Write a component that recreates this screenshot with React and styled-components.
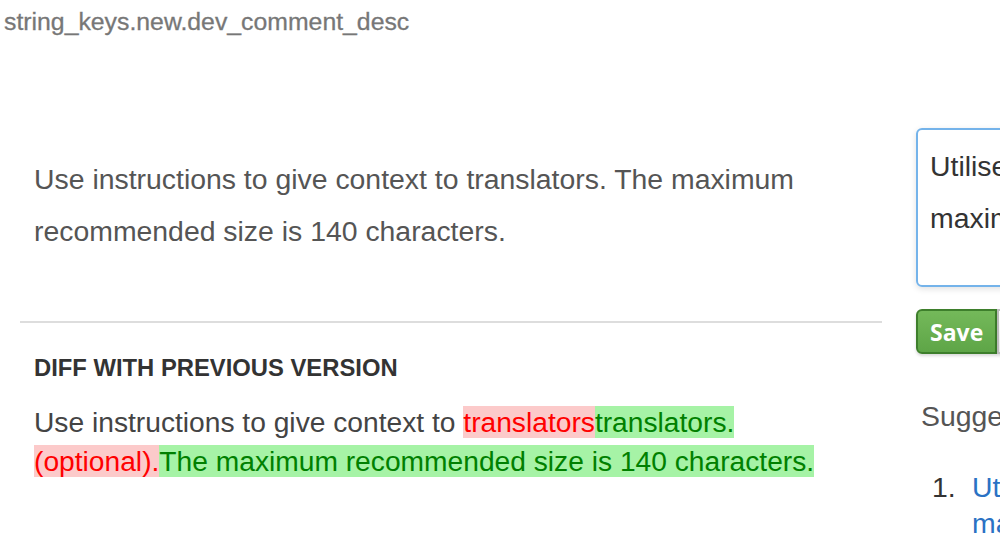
import React from 'react';
import styled, { createGlobalStyle } from 'styled-components';

const GlobalStyle = createGlobalStyle`
    html, body {
        margin: 0;
        padding: 0;
        background: #fff;
        overflow: hidden;
    }
    body {
        font-family: "Liberation Sans", Arial, sans-serif;
        color: #555;
    }
`;

const Page = styled.div`
    width: 1000px;
    height: 552px;
    overflow: hidden;
`;

const KeyTitle = styled.h1`
    margin: 0;
    padding: 8px 0 0 4px;
    font-size: 24.8px;
    line-height: 28px;
    font-weight: normal;
    color: #777;
    -webkit-text-stroke: 0.3px #777;
`;

const Columns = styled.div`
    display: flex;
    gap: 34px;
    padding: 92px 0 0 20px;
`;

const LeftColumn = styled.div`
    flex: 0 0 862px;
`;

const Instructions = styled.p`
    margin: 0;
    padding: 25px 14px 64px;
    font-size: 28.4px;
    line-height: 52px;
    color: #555;
`;

const Divider = styled.hr`
    margin: 0;
    border: none;
    border-top: 2px solid #ddd;
`;

const DiffHeading = styled.h3`
    margin: 0;
    padding: 31px 14px 0;
    font-size: 23.8px;
    line-height: 28px;
    font-weight: bold;
    color: #333;
    text-transform: uppercase;
`;

const DiffText = styled.p`
    margin: 0;
    padding: 21px 14px 0;
    font-size: 28.2px;
    line-height: 39px;
    color: #444;
`;

const Deleted = styled.del`
    text-decoration: none;
    color: #f00;
    background: #fccaca;
`;

const Inserted = styled.ins`
    text-decoration: none;
    color: #008000;
    background: #a6f3a6;
`;

const RightColumn = styled.div`
    flex: 0 0 auto;
    width: 400px;
`;

const Editor = styled.div`
    box-sizing: border-box;
    width: 400px;
    height: 159px;
    padding: 10px 12px;
    border: 2px solid #74b3ea;
    border-radius: 6px;
    box-shadow: 0 2px 6px rgba(0, 0, 0, 0.12);
    font-size: 28.4px;
    line-height: 52px;
    color: #333;
    white-space: nowrap;
`;

const ButtonRow = styled.div`
    display: flex;
    margin-top: 22px;
`;

const Button = styled.button`
    box-sizing: border-box;
    height: 45px;
    padding: 0 12px;
    font-family: "Open Sans", sans-serif;
    font-size: 23px;
    font-weight: bold;
    border-radius: ${p => (p.$first ? '6px 0 0 6px' : '0')};
    border: 2px solid ${p => (p.$primary ? '#3e7f2c' : '#bbb')};
    color: ${p => (p.$primary ? '#fff' : '#333')};
    background: ${p => (p.$primary ? 'linear-gradient(#74b95a, #5ea547)' : 'linear-gradient(#fff, #e6e6e6)')};
    box-shadow: 0 2px 3px rgba(0, 0, 0, 0.15);
`;

const SuggestionsTitle = styled.div`
    margin-top: 47px;
    padding-left: 5px;
    font-size: 28.4px;
    line-height: 30px;
    color: #555;
`;

const SuggestionList = styled.ol`
    margin: 38px 0 0;
    padding-left: 16px;
    list-style: none;
    font-size: 28.4px;
    line-height: 36px;
    color: #333;
`;

const SuggestionItem = styled.li`
    display: flex;
`;

const ItemNumber = styled.span`
    flex: 0 0 40px;
`;

const SuggestionLink = styled.a`
    color: #2a72c4;
    text-decoration: none;
    white-space: nowrap;
`;

export default function App() {
    return (
        <Page>
            <GlobalStyle />
            <KeyTitle>string_keys.new.dev_comment_desc</KeyTitle>
            <Columns>
                <LeftColumn>
                    <Instructions>
                        Use instructions to give context to translators. The maximum
                        recommended size is 140 characters.
                    </Instructions>
                    <Divider />
                    <DiffHeading>Diff with previous version</DiffHeading>
                    <DiffText>
                        Use instructions to give context to <Deleted>translators</Deleted><Inserted>translators. </Inserted><Deleted>(optional).</Deleted><Inserted>The maximum recommended size is 140 characters.</Inserted>
                    </DiffText>
                </LeftColumn>
                <RightColumn>
                    <Editor>
                        Utilisez les instructions pour donner du contexte. Le
                        <br />
                        maximum recommandé est de 140 caractères.
                    </Editor>
                    <ButtonRow>
                        <Button $primary $first>Save</Button>
                        <Button>Cancel</Button>
                    </ButtonRow>
                    <SuggestionsTitle>Suggestions</SuggestionsTitle>
                    <SuggestionList>
                        <SuggestionItem>
                            <ItemNumber>1.</ItemNumber>
                            <SuggestionLink href="#">
                                Utilisez les instructions pour donner du contexte aux traducteurs. Le
                                <br />
                                maximum recommandé est de 140 caractères.
                            </SuggestionLink>
                        </SuggestionItem>
                    </SuggestionList>
                </RightColumn>
            </Columns>
        </Page>
    );
}
